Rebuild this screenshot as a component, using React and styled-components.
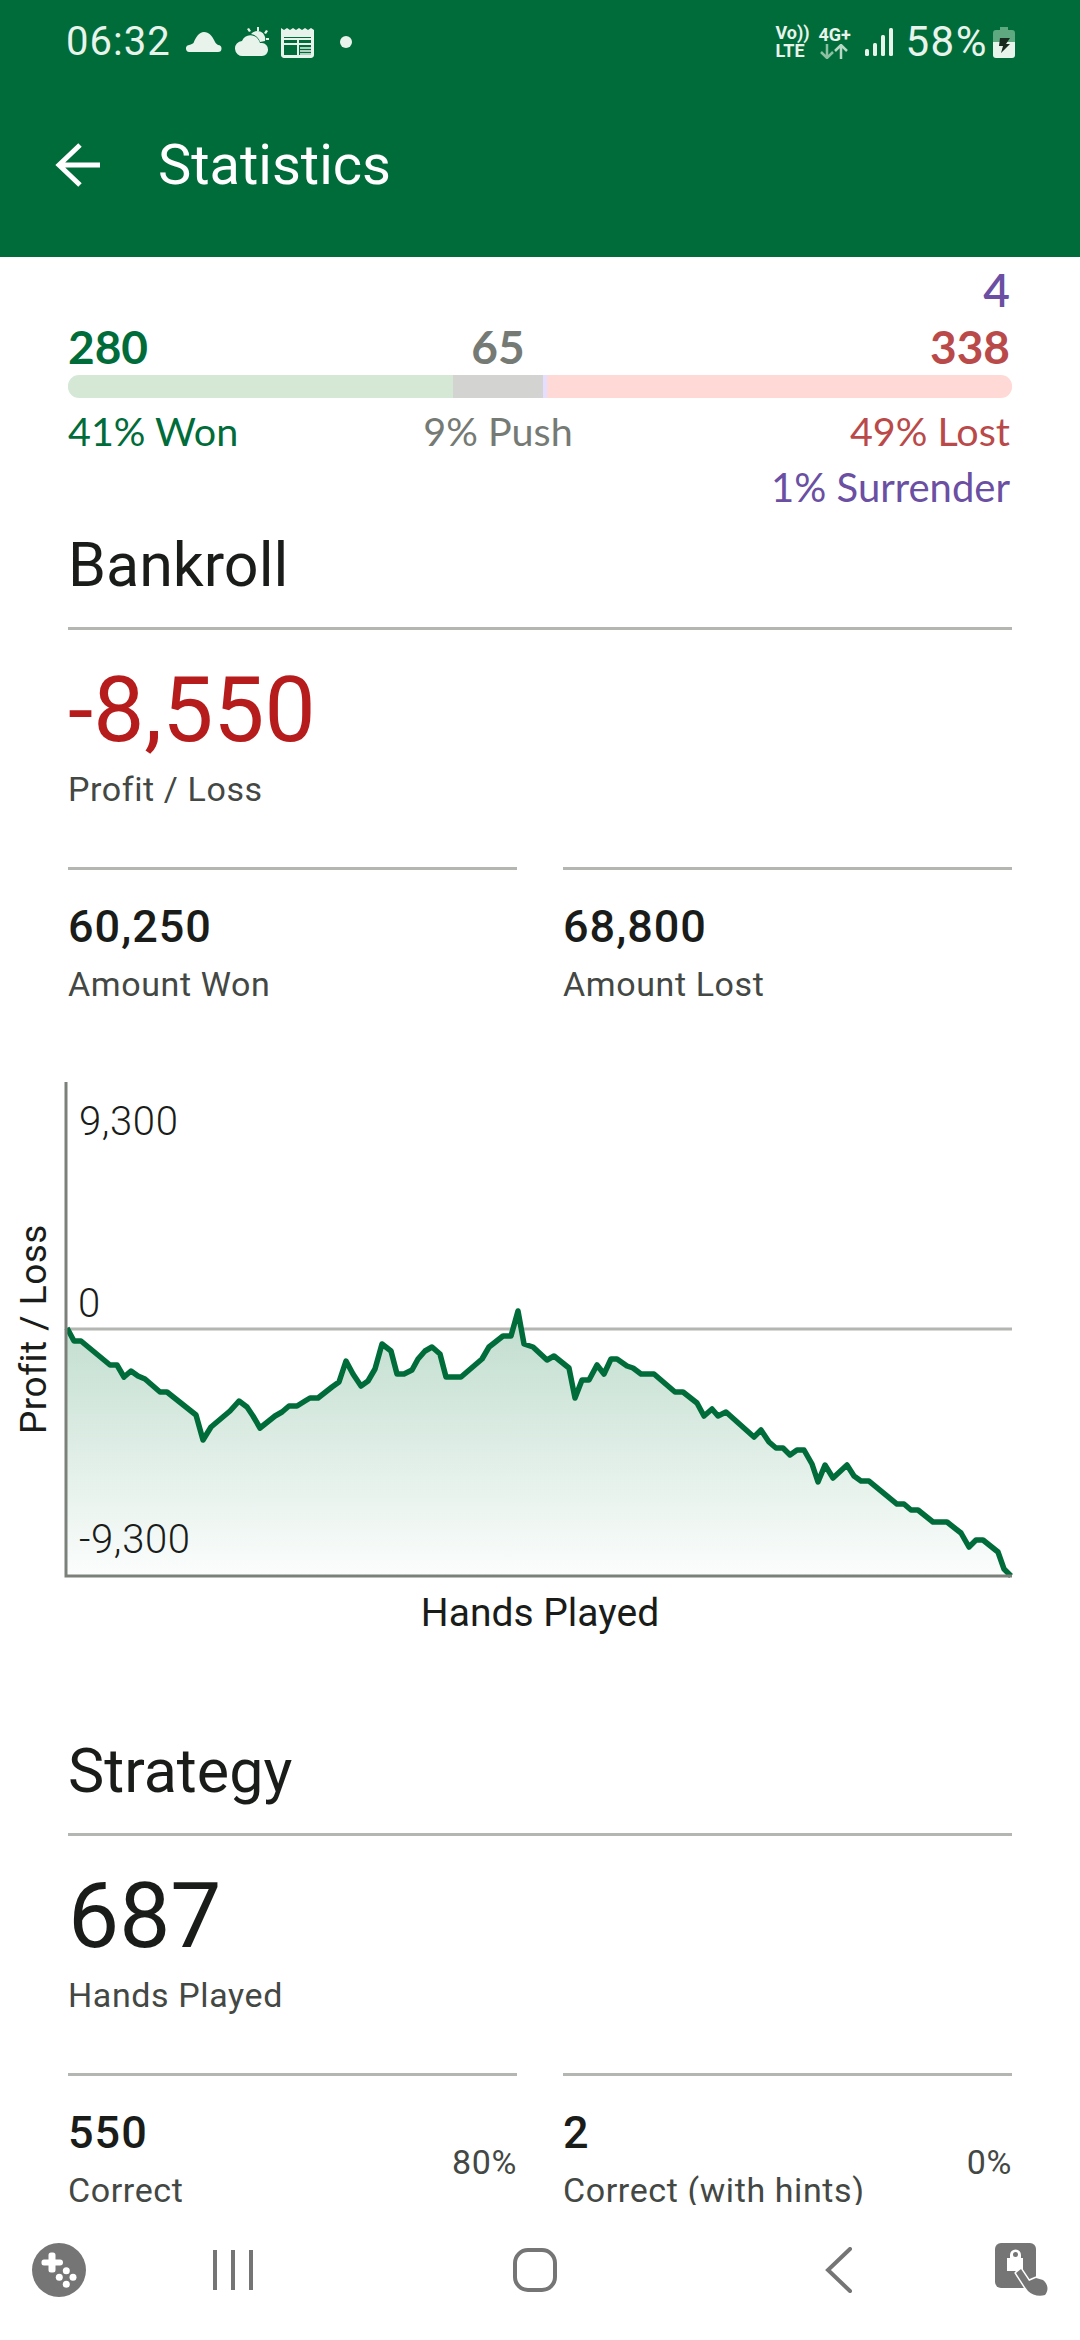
import React from "react";
import styled, { createGlobalStyle } from "styled-components";

const GlobalStyle = createGlobalStyle`
  html, body { margin: 0; padding: 0; background: #fff; }
  * { box-sizing: border-box; }
`;

const GREEN = "#006c3a";
const RULE = "#b4b6b2";
const PURPLE = "#6a4fa3";

const Screen = styled.div`
  width: 1080px;
  height: 2340px;
  display: flex;
  flex-direction: column;
  overflow: hidden;
  background: #fff;
  font-family: Roboto, sans-serif;
`;

const Header = styled.header`
  height: 257px;
  flex: none;
  background: ${GREEN};
`;

const StatusBar = styled.div`
  height: 84px;
  display: flex;
  align-items: center;
  padding: 0 65px 0 66px;
  color: #e8f3ec;
`;

const Clock = styled.span`
  font-size: 40px;
  letter-spacing: 1px;
  line-height: 40px;
  margin-right: 15px;
`;

const StatusIcon = styled.svg`
  flex: none;
  display: block;
  margin-left: ${(p) => p.$ml || 0}px;
`;

const Spacer = styled.div`
  flex: 1;
`;

const TinyStack = styled.div`
  width: ${(p) => p.$w}px;
  margin-right: ${(p) => p.$mr}px;
  font-size: 18px;
  font-weight: 700;
  line-height: 18px;
  white-space: nowrap;
  flex: none;
`;

const Battery = styled.span`
  font-size: 42px;
  letter-spacing: 1.5px;
  line-height: 40px;
  margin: 0 5px 0 13px;
`;

const TitleRow = styled.div`
  height: 162px;
  display: flex;
  align-items: center;
  padding-left: 54px;
  color: #fff;
`;

const Title = styled.h1`
  margin: 0 0 0 56px;
  font-size: 56px;
  font-weight: 400;
  line-height: 60px;
`;

const Content = styled.main`
  flex: 1;
  min-height: 0;
  overflow: hidden;
  padding: 13px 68px 0;
`;

const SurrenderCount = styled.div`
  text-align: right;
  font-family: Lato, sans-serif;
  font-size: 46px;
  font-weight: 600;
  line-height: 40px;
  color: ${PURPLE};
  padding-right: 2px;
`;

const Columns = styled.div`
  display: grid;
  grid-template-columns: 385px 90px 1fr;
  font-family: Lato, sans-serif;
  white-space: nowrap;
`;

const CountRow = styled(Columns)`
  margin-top: 17px;
  font-size: 46px;
  font-weight: 700;
  line-height: 40px;
`;

const PercentRow = styled(Columns)`
  margin-top: 10px;
  font-size: 39.5px;
  line-height: 46px;
`;

const Cell = styled.div`
  color: ${(p) => p.$color};
  justify-self: ${(p) => p.$align};
  padding-right: ${(p) => (p.$align === "end" ? 2 : 0)}px;
`;

const SurrenderPercent = styled.div`
  margin-top: 10px;
  text-align: right;
  padding-right: 2px;
  font-family: Lato, sans-serif;
  font-size: 40px;
  line-height: 46px;
  color: ${PURPLE};
`;

const Bar = styled.div`
  margin-top: 8px;
  height: 23px;
  display: flex;
  border-radius: 11px;
  overflow: hidden;
`;

const Segment = styled.div`
  flex: none;
  background: ${(p) => p.$color};
`;

const SectionTitle = styled.h2`
  margin: ${(p) => p.$mt}px 0 0;
  padding-bottom: 27px;
  border-bottom: 3px solid ${RULE};
  font-size: 61px;
  font-weight: 400;
  line-height: 70px;
  color: #1a1c1a;
`;

const BigNumber = styled.div`
  margin-top: 35px;
  font-size: 91px;
  line-height: 90px;
  color: ${(p) => p.$color};
`;

const Caption = styled.div`
  font-size: 34px;
  line-height: 44px;
  letter-spacing: 0.6px;
  color: #444844;
  white-space: nowrap;
`;

const BigCaption = styled(Caption)`
  margin-top: 12px;
`;

const StatGrid = styled.div`
  display: grid;
  grid-template-columns: 1fr 1fr;
  column-gap: 46px;
  margin-top: ${(p) => p.$mt}px;
`;

const Stat = styled.div`
  border-top: 3px solid ${RULE};
  padding-top: 32px;
  display: flex;
  justify-content: space-between;
  align-items: center;
`;

const StatValue = styled.div`
  font-size: 45px;
  font-weight: 500;
  letter-spacing: 1px;
  line-height: 50px;
  color: #1a1c1a;
`;

const StatCaption = styled(Caption)`
  margin-top: 10px;
`;

const StatPercent = styled.div`
  font-size: 34px;
  line-height: 40px;
  color: #444844;
  letter-spacing: 0.6px;
  margin-top: 4px;
`;

const Chart = styled.section`
  position: relative;
  width: 960px;
  height: 510px;
  margin: 68px 0 0 -8px;
`;

const ChartSvg = styled.svg`
  display: block;
`;

const AxisLabel = styled.div`
  position: absolute;
  left: ${(p) => p.$x}px;
  top: ${(p) => p.$y}px;
  font-size: 40px;
  font-weight: 300;
  letter-spacing: 0.6px;
  line-height: 40px;
  color: #1a1c1a;
  white-space: nowrap;
`;

const YTitle = styled.div`
  position: absolute;
  left: -26px;
  top: 255px;
  transform: translate(0, -50%) rotate(-90deg);
  transform-origin: center;
  width: 0;
  display: flex;
  justify-content: center;
  font-size: 37px;
  line-height: 40px;
  letter-spacing: 0.5px;
  white-space: nowrap;
  color: #1a1c1a;
`;

const XTitle = styled.div`
  margin-top: 9px;
  text-align: center;
  font-size: 39px;
  line-height: 40px;
  color: #1a1c1a;
`;

const NavBar = styled.nav`
  height: 135px;
  flex: none;
  display: flex;
  align-items: center;
  background: #fff;
  padding: 0 0 5px 32px;
`;

const NavIcon = styled.svg`
  display: block;
  flex: none;
  margin-left: ${(p) => p.$ml || 0}px;
`;

const points = [
  [67, 1329], [74, 1342], [81, 1342], [110, 1366], [117, 1366], [124, 1378], [131, 1372], [138, 1377],
  [145, 1380], [160, 1393], [167, 1393], [196, 1416], [203, 1441], [211, 1428], [230, 1412], [239, 1402],
  [247, 1408], [253, 1417], [260, 1429], [275, 1417], [282, 1413], [289, 1407], [297, 1407], [305, 1402],
  [310, 1399], [318, 1399], [332, 1388], [339, 1383], [346, 1362], [353, 1375], [361, 1387], [368, 1382],
  [375, 1370], [382, 1345], [391, 1352], [397, 1375], [404, 1375], [412, 1371], [418, 1360], [425, 1352],
  [432, 1348], [440, 1355], [446, 1378], [461, 1378], [482, 1360], [489, 1348], [503, 1337], [511, 1337],
  [518, 1312], [524, 1345], [533, 1348], [547, 1361], [554, 1357], [569, 1369], [575, 1399], [582, 1381],
  [589, 1381], [597, 1366], [604, 1375], [611, 1360], [617, 1360], [627, 1367], [633, 1369], [641, 1375],
  [654, 1375], [675, 1393], [683, 1393], [697, 1404], [704, 1417], [712, 1410], [718, 1417], [726, 1413],
  [754, 1438], [761, 1431], [769, 1443], [776, 1449], [783, 1449], [790, 1456], [797, 1451], [804, 1451],
  [812, 1465], [818, 1483], [825, 1466], [833, 1479], [847, 1466], [854, 1477], [861, 1482], [869, 1482],
  [897, 1505], [904, 1505], [911, 1511], [918, 1511], [933, 1523], [947, 1523], [961, 1534], [969, 1548],
  [976, 1541], [983, 1541], [998, 1553], [1004, 1570], [1011, 1577],
];

const linePath = points.map(([x, y], i) => `${i ? "L" : "M"}${x} ${y}`).join(" ");
const areaPath = `${linePath} L1011 1576 L67 1576 Z`;

const segments = [
  { w: 385, color: "#d4e8d5" },
  { w: 90, color: "#d3d4d2" },
  { w: 4, color: "#e5deff" },
  { w: 465, color: "#ffd9d6" },
];

const StatusBarIcons = () => (
  <StatusBar>
    <Clock>06:32</Clock>
    <StatusIcon width="36" height="22" viewBox="0 0 36 22" fill="#e8f3ec">
      <path d="M4 21a3.500 3.500 0 0 1-1-7c1.500-.4 3-.6 4.500-2C10 6 13 1 18 1s8 4 10 8c1 2 2 4 4 5a3.500 3.500 0 0 1 0 7Z" />
    </StatusIcon>
    <StatusIcon $ml={13} width="34" height="30" viewBox="0 0 34 30" fill="#e8f3ec">
      <path d="M8 29a7.500 7.500 0 0 1-1-15c2-5 7-7 12-5 3 1 5 4 6 7h2a6.500 6.500 0 0 1 6 6.500V23a6 6 0 0 1-6 6Z" />
      <path d="M16 7a8 8 0 0 1 14 7l-5 1c-1-4-4-7-9-8Z" />
      <path d="M22 0h2v4h-2ZM12 2l2-1 2 3-2 1ZM31 3l2 1-2 3-2-1ZM31 11h3v2h-3Z" />
    </StatusIcon>
    <StatusIcon $ml={12} width="33" height="31" viewBox="0 0 33 31" fill="none" stroke="#e8f3ec">
      <path d="M1.500 3v25a1.500 1.500 0 0 0 1.500 1.500h27a1.500 1.500 0 0 0 1.500-1.500V3" strokeWidth="3" />
      <path d="M0 1 3 3 6 1l3 2 3-2 3 2 3-2 3 2 3-2 3 2 3-2 3 2 0 7H0Z" fill="#e8f3ec" stroke="none" />
      <path d="M3 17h27M17 12v17M3 12h27" strokeWidth="2" />
      <path d="M19 21h11M19 24h11M19 27h11" strokeWidth="1.500" />
    </StatusIcon>
    <StatusIcon $ml={26} width="12" height="12" viewBox="0 0 12 12" fill="#e8f3ec">
      <circle cx="6" cy="6" r="6" />
    </StatusIcon>
    <Spacer />
    <TinyStack $w={32} $mr={11}>
      <div>Vo))</div>
      <div>LTE</div>
    </TinyStack>
    <TinyStack $w={34} $mr={12}>
      <div>4G+</div>
      <StatusIcon width="30" height="15" viewBox="0 0 30 15" fill="none" stroke="#8dbfa3" strokeWidth="2.500">
        <path d="M8 0v13M2 8l6 6 6-6" />
        <path d="M22 15V2M16 7l6-6 6 6" stroke="#b6d8c4" />
      </StatusIcon>
    </TinyStack>
    <StatusIcon width="28" height="30" viewBox="0 0 28 30" fill="#e8f3ec">
      <rect x="0" y="22" width="4" height="7" rx="1.500" />
      <rect x="8" y="16" width="4" height="13" rx="1.500" />
      <rect x="16" y="8" width="4" height="21" rx="1.500" />
      <rect x="24" y="1" width="4" height="28" rx="1.500" />
    </StatusIcon>
    <Battery>58%</Battery>
    <StatusIcon width="22" height="31" viewBox="0 0 22 31">
      <path d="M7 0h8v3h4a3 3 0 0 1 3 3v9H0V6a3 3 0 0 1 3-3h4Z" fill="#5ea980" />
      <path d="M0 15h22v13a3 3 0 0 1-3 3H3a3 3 0 0 1-3-3Z" fill="#e8f3ec" />
      <path d="M7 11h10l-4 6h4l-9 9 2-7H6Z" fill="#1a2a20" />
    </StatusIcon>
  </StatusBar>
);

export default function App() {
  return (
    <Screen>
      <GlobalStyle />
      <Header>
        <StatusBarIcons />
        <TitleRow>
          <svg width="48" height="48" viewBox="0 0 48 48" fill="none" stroke="#fff" strokeWidth="5">
            <path d="M46 24H6M26 4 5 24l21 20" />
          </svg>
          <Title>Statistics</Title>
        </TitleRow>
      </Header>

      <Content>
        <SurrenderCount>4</SurrenderCount>
        <CountRow>
          <Cell $color={GREEN} $align="start">280</Cell>
          <Cell $color="#757a75" $align="center">65</Cell>
          <Cell $color="#ba4a4a" $align="end">338</Cell>
        </CountRow>
        <Bar>
          {segments.map((s) => (
            <Segment key={s.color} $color={s.color} style={{ width: s.w }} />
          ))}
        </Bar>
        <PercentRow>
          <Cell $color={GREEN} $align="start">41% Won</Cell>
          <Cell $color="#757a75" $align="center">9% Push</Cell>
          <Cell $color="#ba4a4a" $align="end">49% Lost</Cell>
        </PercentRow>
        <SurrenderPercent>1% Surrender</SurrenderPercent>

        <SectionTitle $mt={20}>Bankroll</SectionTitle>
        <BigNumber $color="#b71c1c">-8,550</BigNumber>
        <BigCaption>Profit / Loss</BigCaption>
        <StatGrid $mt={56}>
          <Stat>
            <div>
              <StatValue>60,250</StatValue>
              <StatCaption>Amount Won</StatCaption>
            </div>
          </Stat>
          <Stat>
            <div>
              <StatValue>68,800</StatValue>
              <StatCaption>Amount Lost</StatCaption>
            </div>
          </Stat>
        </StatGrid>

        <Chart>
          <ChartSvg width="960" height="510" viewBox="60 1075 960 510">
            <defs>
              <linearGradient id="profitFill" x1="0" y1="1312" x2="0" y2="1576" gradientUnits="userSpaceOnUse">
                <stop offset="0" stopColor="#bfdccd" />
                <stop offset="1" stopColor="#fbfdfc" />
              </linearGradient>
            </defs>
            <path d="M66 1330H1012" stroke={RULE} strokeWidth="3" />
            <path d={areaPath} fill="url(#profitFill)" />
            <path d={linePath} fill="none" stroke={GREEN} strokeWidth="5.500" strokeLinejoin="round" />
            <path d="M66 1083V1577H1012" fill="none" stroke="#7c807a" strokeWidth="3" />
          </ChartSvg>
          <AxisLabel $x={19} $y={28}>9,300</AxisLabel>
          <AxisLabel $x={18} $y={210}>0</AxisLabel>
          <AxisLabel $x={19} $y={446}>-9,300</AxisLabel>
          <YTitle>Profit / Loss</YTitle>
        </Chart>
        <XTitle>Hands Played</XTitle>

        <SectionTitle $mt={103}>Strategy</SectionTitle>
        <BigNumber $color="#1a1c1a">687</BigNumber>
        <BigCaption>Hands Played</BigCaption>
        <StatGrid $mt={56}>
          <Stat>
            <div>
              <StatValue>550</StatValue>
              <StatCaption>Correct</StatCaption>
            </div>
            <StatPercent>80%</StatPercent>
          </Stat>
          <Stat>
            <div>
              <StatValue>2</StatValue>
              <StatCaption>Correct (with hints)</StatCaption>
            </div>
            <StatPercent>0%</StatPercent>
          </Stat>
        </StatGrid>
      </Content>

      <NavBar>
        <NavIcon width="54" height="54" viewBox="0 0 54 54">
          <circle cx="27" cy="27" r="27" fill="#757575" />
          <path d="M9.500 19a2.500 2.500 0 0 1 2.500-2.500h4.500V12a2.500 2.500 0 0 1 2.500-2.500h2a2.500 2.500 0 0 1 2.500 2.500v4.500H28a2.500 2.500 0 0 1 0 6h-4.500V27a2.500 2.500 0 0 1-2.500 2.500h-2a2.500 2.500 0 0 1-2.500-2.500v-4.500H12A2.500 2.500 0 0 1 9.500 20Z" fill="#fff" />
          <circle cx="34.300" cy="27.700" r="3.500" fill="#fff" />
          <circle cx="27.300" cy="34.300" r="3.500" fill="#fff" />
          <circle cx="41" cy="34.300" r="3.500" fill="#fff" />
          <circle cx="34.300" cy="41.300" r="3.500" fill="#fff" />
        </NavIcon>
        <NavIcon $ml={126} width="42" height="44" viewBox="0 0 42 44" fill="none" stroke="#757575" strokeWidth="4">
          <path d="M3 2v40M21 2v40M39 2v40" />
        </NavIcon>
        <NavIcon $ml={259} width="44" height="44" viewBox="0 0 44 44" fill="none" stroke="#757575" strokeWidth="4">
          <rect x="2" y="2" width="40" height="40" rx="13" />
        </NavIcon>
        <NavIcon $ml={268} width="28" height="46" viewBox="0 0 28 46" fill="none" stroke="#757575" strokeWidth="4" strokeLinecap="round">
          <path d="M25 2 3 23l22 21" />
        </NavIcon>
        <NavIcon $ml={142} width="54" height="54" viewBox="0 0 54 54">
          <rect x="0" y="0" width="41" height="45" rx="6" fill="#757575" />
          <path d="M12 15h3v-3a5.500 5.500 0 0 1 11 0v3h2v13H12Z" fill="#fff" />
          <circle cx="20.500" cy="11.500" r="2.500" fill="#757575" />
          <path d="M21 30 26 26 34 38 41 35 48 37C53 41 54 47 50 52 44 54 37 52 33 48L30 44Z" fill="#757575" stroke="#fff" strokeWidth="3" strokeLinejoin="round" paintOrder="stroke" />
        </NavIcon>
      </NavBar>
    </Screen>
  );
}
